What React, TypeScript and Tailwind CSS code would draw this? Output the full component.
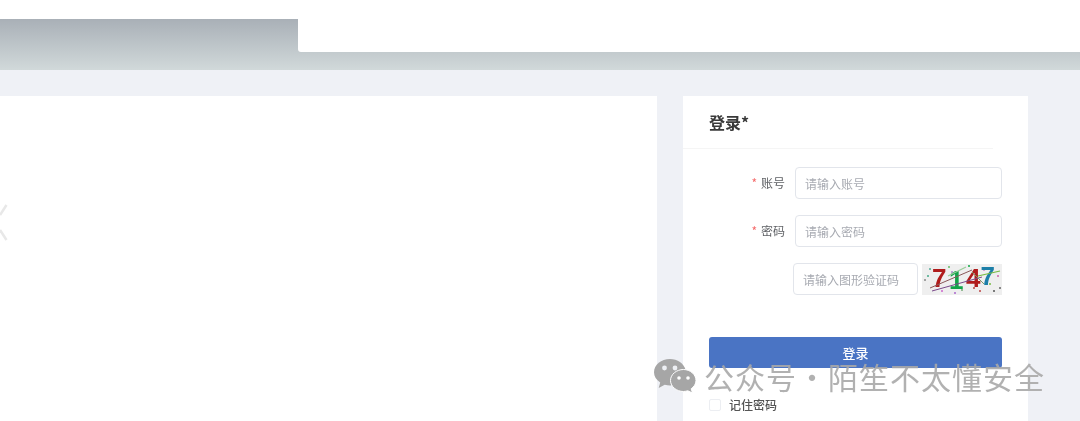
const cjk = "font-['Noto_Sans_CJK_SC','Noto_Sans',sans-serif]";

function Captcha() {
  const dots = [
    [3, 16, "#888"], [8, 5, "#5a9"], [14, 22, "#c9c"], [20, 27, "#c6c"], [27, 3, "#6b6"], [33, 29, "#a6c"],
    [40, 26, "#7a7"], [47, 2, "#1a4"], [52, 24, "#b44"], [58, 27, "#b44"], [62, 6, "#c8c"], [68, 20, "#7b4"],
    [72, 27, "#555"], [76, 12, "#c6a"], [78, 24, "#666"], [66, 12, "#48a"], [6, 12, "#4a8"], [30, 8, "#a8c"],
  ] as const;
  return (
    <svg width="80" height="31" viewBox="0 0 80 31" className="block shrink-0 bg-[#efefef]">
      {dots.map(([x, y, c], i) => (
        <circle key={i} cx={x} cy={y} r="1" fill={c} />
      ))}
      <g fontFamily="'Liberation Sans', sans-serif" fontWeight="700" fontSize="26">
        <text x="10" y="23" fill="#b01c1c">7</text>
        <text x="27" y="25" fill="#12a34a">1</text>
        <text x="44" y="23" fill="#b01c1c">4</text>
        <text x="58.500" y="21" fill="#1c7fa8">7</text>
      </g>
      <path d="M8 24 L50 6" stroke="#8a5a5a" strokeWidth="1" fill="none" />
      <path d="M10 27 L60 13" stroke="#7a4a8a" strokeWidth="1" fill="none" />
      <path d="M26 12 L44 3" stroke="#9c9" strokeWidth="1.200" fill="none" />
      <path d="M56 12 L78 7" stroke="#7b4" strokeWidth="1.200" fill="none" />
      <path d="M50 8 L62 20" stroke="#7a9a6a" strokeWidth="1" fill="none" />
    </svg>
  );
}

function Field({ label, placeholder }: { label: string; placeholder: string }) {
  return (
    <div className="flex items-center h-8">
      <label className="w-[76px] pr-[10px] text-right text-xs text-[#606266] shrink-0">
        <span className="text-[#f56c6c] mr-1">*</span>
        {label}
      </label>
      <input
        placeholder={placeholder}
        className="w-[207px] h-8 px-[9px] text-xs bg-white border border-[#e2e5eb] rounded-[4px] outline-none placeholder:text-[#a8abb2]"
      />
    </div>
  );
}

function WeChatLogo() {
  return (
    <svg width="42" height="34" viewBox="0 0 42 34" fill="#a6a6a6">
      <path d="M16 0C7.2 0 0 5.9 0 13.2c0 4.2 2.3 7.6 6.2 10.2L4.700 29l6-3.300c1.900.4 3.500.7 5.300.7h1.400c-.3-1.100-.5-2.300-.5-3.500 0-6.700 5.800-12.200 13.100-12.200h1.600C29.900 4.500 23.500 0 16 0z" />
      <path d="M42 21.500C42 15.400 36.100 10.500 29.500 10.500 22.500 10.500 16.500 15.400 16.500 21.500S22.500 32.500 29.500 32.500c1.400 0 2.900-.4 4.300-.7L38.500 34l-1.300-4.200C40 27.700 42 25 42 21.500z" stroke="#ffffff" strokeWidth="1" />
      <circle cx="10.500" cy="9" r="2.400" fill="#eef0f4" />
      <circle cx="21" cy="9" r="2.400" fill="#eef0f4" />
      <circle cx="25" cy="19" r="1.800" fill="#fff" />
      <circle cx="34" cy="19" r="1.800" fill="#fff" />
    </svg>
  );
}

export default function App() {
  return (
    <div className={`relative h-[421px] w-[1080px] overflow-hidden bg-[#eff1f6] ${cjk} blur-[0.5px]`}>
      {/* Top bar */}
      <div className="h-[19px] bg-white" />
      <div className="h-[51px] pl-[298px] bg-gradient-to-b from-[#a9b0b7] to-[#d1d9da]">
        <div className="h-[33px] bg-white rounded-bl-[3px]" />
      </div>

      <div className="flex pt-[26px] items-start">
        {/* Left panel */}
        <div className="relative w-[657px] h-[325px] bg-white">
          <svg width="8" height="38" viewBox="0 0 8 38" className="absolute left-0 top-[108px]" fill="none" stroke="#e8e8e8" strokeWidth="2.500">
            <path d="M6.500 1 L0 11" />
            <path d="M0 26 L6.500 36" />
          </svg>
        </div>

        {/* Login card */}
        <div className="ml-[26px] w-[345px] h-[325px] bg-white">
          <div className="w-[310px] h-[53px] pl-[26px] flex items-center border-b border-[#f5f5f5]">
            <h2 className="text-base font-bold text-[#3a3a3a]">登录*</h2>
          </div>
          <div className="pt-[18px] pl-[36px] flex flex-col gap-4">
            <Field label="账号" placeholder="请输入账号" />
            <Field label="密码" placeholder="请输入密码" />
            <div className="flex items-center h-8 pl-[74px]">
              <input
                placeholder="请输入图形验证码"
                className="w-[125px] h-8 px-[9px] text-xs bg-white border border-[#e2e5eb] rounded-[4px] outline-none placeholder:text-[#a8abb2]"
              />
              <div className="ml-1">
                <Captcha />
              </div>
            </div>
          </div>
          <div className="pl-[26px] pr-[26px] pt-[42px]">
            <button className="w-full h-[31px] rounded-[3px] bg-[#4a74c4] text-white text-[13px] font-medium">登录</button>
            <div className="flex items-center mt-[29px]">
              <span className="w-3 h-3 border border-[#eceef2] rounded-[2px] bg-white" />
              <span className="ml-2 text-xs font-medium text-[#555]">记住密码</span>
            </div>
          </div>
        </div>
      </div>

      {/* Watermark */}
      <div className="absolute left-[654px] top-[359px] flex items-center">
        <WeChatLogo />
        <span className="ml-[8px] text-[30px] leading-[34px] tracking-[1px] text-[#a8a8a8]/90 whitespace-nowrap">公众号·陌笙不太懂安全</span>
      </div>
    </div>
  );
}
